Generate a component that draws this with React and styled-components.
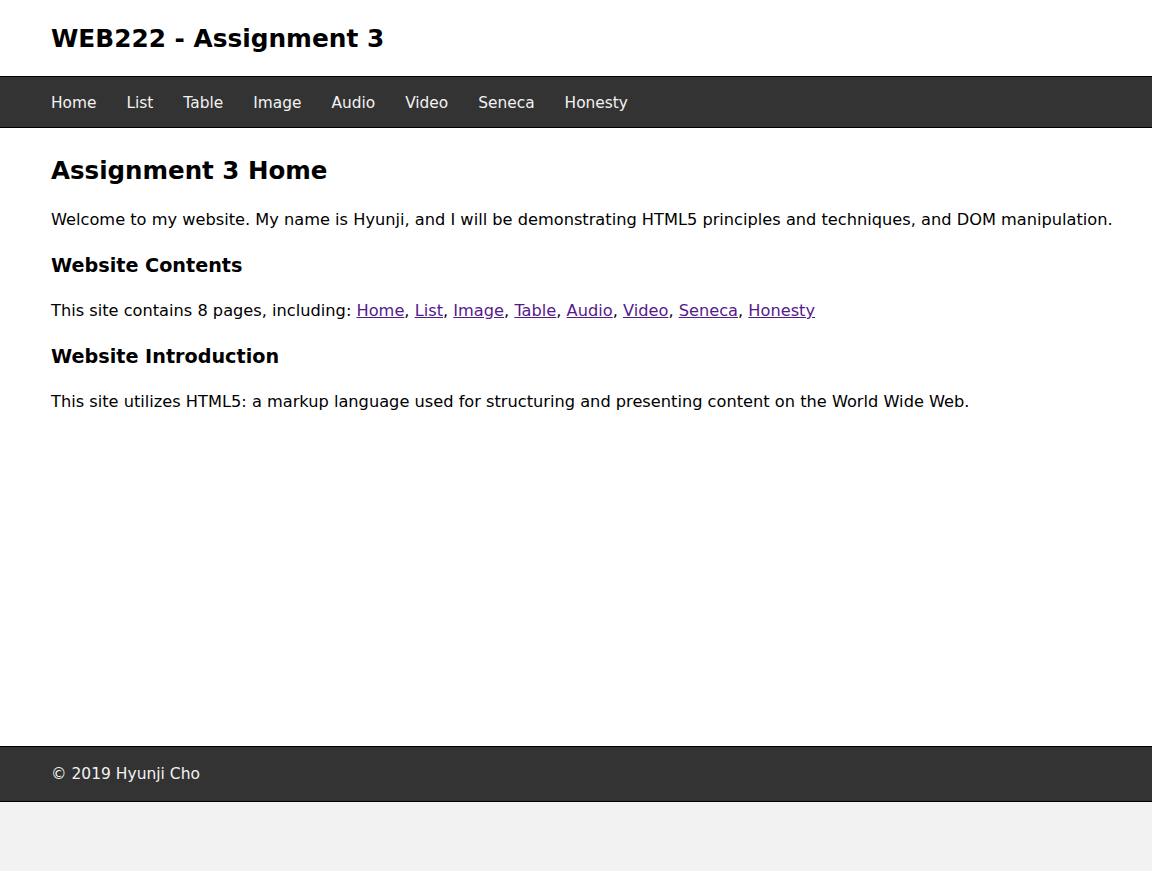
import React from 'react'
import styled, { createGlobalStyle } from 'styled-components'

const GlobalStyle = createGlobalStyle`
  html, body {
    margin: 0;
    padding: 0;
    background: #f2f2f2;
    font-family: "DejaVu Sans", Tahoma, sans-serif;
  }
`

const Page = styled.div`
  background: #fff;
`

const Header = styled.header`
  height: 76px;
  padding: 0 51px;
  display: flex;
  align-items: center;
  border-bottom: 1px solid #000;
`

const SiteTitle = styled.h1`
  margin: 0;
  font-size: 24.8px;
  font-weight: bold;
  color: #000;
`

const Nav = styled.nav`
  background: #333;
  height: 50px;
  padding: 0 36px;
  display: flex;
  align-items: center;
  border-bottom: 1px solid #000;
`

const NavLink = styled.a`
  color: #f2f2f2;
  font-size: 15.4px;
  padding: 1px 15px 0;
  text-decoration: none;
`

const Main = styled.main`
  padding: 28px 20px 0 51px;
  min-height: 618px;
  box-sizing: border-box;
`

const Heading = styled.h2`
  margin: 0 0 24px;
  font-size: 24.5px;
  font-weight: bold;
`

const SubHeading = styled.h3`
  margin: 0 0 23px;
  font-size: 19.2px;
  font-weight: bold;
`

const Para = styled.p`
  margin: 0 0 23px;
  font-size: 16.22px;
  line-height: 22px;
`

const Link = styled.a`
  color: #551a8b;
`

const Footer = styled.footer`
  background: #333;
  height: 54px;
  padding: 0 51px;
  display: flex;
  align-items: center;
  border-top: 1px solid #000;
  border-bottom: 1px solid #000;
  color: #f2f2f2;
  font-size: 15.5px;
`

const pages = ['Home', 'List', 'Table', 'Image', 'Audio', 'Video', 'Seneca', 'Honesty']
const contents = ['Home', 'List', 'Image', 'Table', 'Audio', 'Video', 'Seneca', 'Honesty']

export default function App() {
  return (
    <>
      <GlobalStyle />
      <Page>
        <Header>
          <SiteTitle>WEB222 - Assignment 3</SiteTitle>
        </Header>
        <Nav>
          {pages.map(p => <NavLink key={p} href="#">{p}</NavLink>)}
        </Nav>
        <Main>
          <Heading>Assignment 3 Home</Heading>
          <Para>Welcome to my website. My name is Hyunji, and I will be demonstrating HTML5 principles and techniques, and DOM manipulation.</Para>
          <SubHeading>Website Contents</SubHeading>
          <Para>
            This site contains 8 pages, including:{' '}
            {contents.map((c, i) => (
              <React.Fragment key={c}>
                <Link href="#">{c}</Link>{i < contents.length - 1 ? ', ' : ''}
              </React.Fragment>
            ))}
          </Para>
          <SubHeading>Website Introduction</SubHeading>
          <Para>This site utilizes HTML5: a markup language used for structuring and presenting content on the World Wide Web.</Para>
        </Main>
        <Footer>© 2019 Hyunji Cho</Footer>
      </Page>
    </>
  )
}
